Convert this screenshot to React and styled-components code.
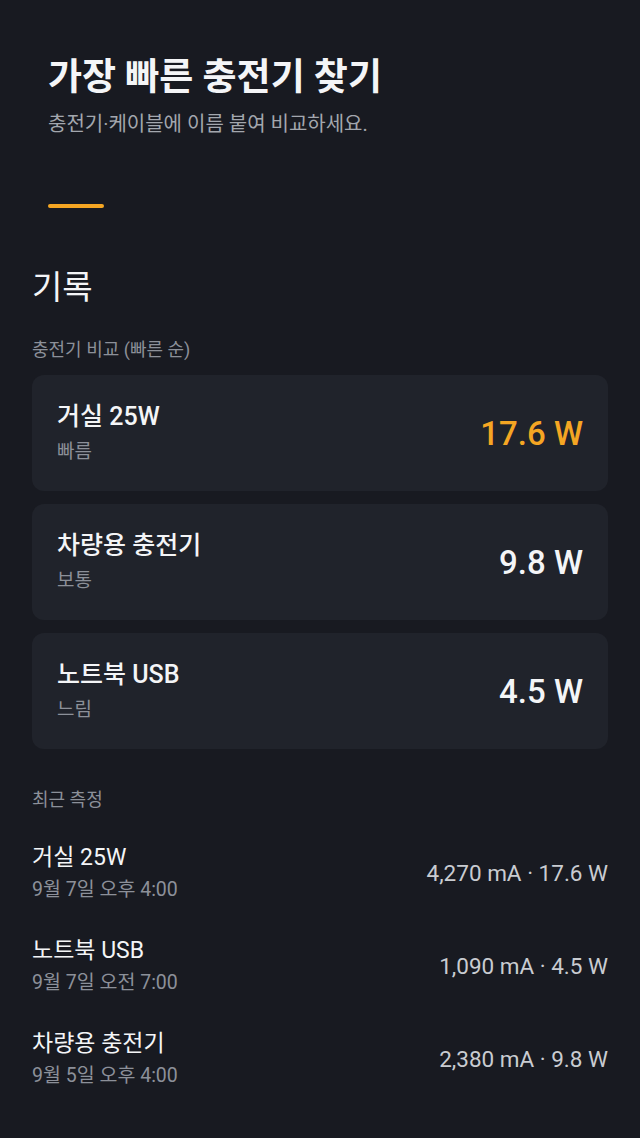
import React from "react";
import styled, { createGlobalStyle } from "styled-components";

const Global = createGlobalStyle`
  body {
    margin: 0;
    background: #181a21;
    font-family: Roboto, "Noto Sans CJK KR", sans-serif;
    color: #f2f3f5;
  }
`;

const Page = styled.div`
  min-height: 1138px;
  background: #181a21;
  box-sizing: border-box;
`;

const Header = styled.header`
  padding: 54px 48px 0 48px;
`;

const Title = styled.h1`
  margin: 0;
  font-size: 37px;
  line-height: 48px;
  font-weight: 700;
  color: #f4f5f7;
`;

const Subtitle = styled.p`
  margin: 9px 0 0;
  font-size: 20px;
  line-height: 26px;
  color: #a3a7ae;
`;

const Accent = styled.div`
  width: 56px;
  height: 4px;
  border-radius: 2px;
  background: #f5a623;
  margin-top: 67px;
`;

const Content = styled.main`
  padding: 58px 32px 40px;
`;

const SectionTitle = styled.h2`
  margin: 0;
  font-size: 33px;
  line-height: 44px;
  font-weight: 400;
  color: #f4f5f7;
`;

const Label = styled.div`
  font-size: 18px;
  line-height: 24px;
  color: #8c9099;
  margin-top: ${(p) => p.top}px;
`;

const CardList = styled.div`
  display: flex;
  flex-direction: column;
  gap: 13px;
  margin-top: 13px;
`;

const Card = styled.div`
  height: 116px;
  box-sizing: border-box;
  border-radius: 12px;
  background: #20232b;
  padding: 0 25px;
  display: flex;
  align-items: center;
  justify-content: space-between;
`;

const CardName = styled.div`
  font-size: 25px;
  line-height: 32px;
  font-weight: 500;
  color: #f4f5f7;
`;

const CardSub = styled.div`
  font-size: 19px;
  line-height: 26px;
  color: #8c9099;
  margin-top: 6px;
`;

const CardValue = styled.div`
  font-size: 33px;
  font-weight: 500;
  color: ${(p) => (p.$accent ? "#f5a623" : "#f4f5f7")};
`;

const RecentList = styled.div`
  display: flex;
  flex-direction: column;
  margin-top: 14px;
`;

const Row = styled.div`
  height: 93px;
  display: flex;
  align-items: center;
  justify-content: space-between;
`;

const RowName = styled.div`
  font-size: 23px;
  line-height: 30px;
  color: #f4f5f7;
`;

const RowDate = styled.div`
  font-size: 19.5px;
  line-height: 26px;
  color: #8c9099;
  margin-top: 4px;
`;

const RowValue = styled.div`
  font-size: 22.5px;
  color: #c9ccd1;
`;

const chargers = [
  { name: "거실 25W", speed: "빠름", watt: "17.6 W", accent: true },
  { name: "차량용 충전기", speed: "보통", watt: "9.8 W" },
  { name: "노트북 USB", speed: "느림", watt: "4.5 W" },
];

const recent = [
  { name: "거실 25W", date: "9월 7일 오후 4:00", value: "4,270 mA · 17.6 W" },
  { name: "노트북 USB", date: "9월 7일 오전 7:00", value: "1,090 mA · 4.5 W" },
  { name: "차량용 충전기", date: "9월 5일 오후 4:00", value: "2,380 mA · 9.8 W" },
];

export default function App() {
  return (
    <Page>
      <Global />
      <Header>
        <Title>가장 빠른 충전기 찾기</Title>
        <Subtitle>충전기·케이블에 이름 붙여 비교하세요.</Subtitle>
        <Accent />
      </Header>
      <Content>
        <SectionTitle>기록</SectionTitle>
        <Label top={28}>충전기 비교 (빠른 순)</Label>
        <CardList>
          {chargers.map((c) => (
            <Card key={c.name}>
              <div>
                <CardName>{c.name}</CardName>
                <CardSub>{c.speed}</CardSub>
              </div>
              <CardValue $accent={c.accent}>{c.watt}</CardValue>
            </Card>
          ))}
        </CardList>
        <Label top={39}>최근 측정</Label>
        <RecentList>
          {recent.map((r) => (
            <Row key={r.name}>
              <div>
                <RowName>{r.name}</RowName>
                <RowDate>{r.date}</RowDate>
              </div>
              <RowValue>{r.value}</RowValue>
            </Row>
          ))}
        </RecentList>
      </Content>
    </Page>
  );
}
